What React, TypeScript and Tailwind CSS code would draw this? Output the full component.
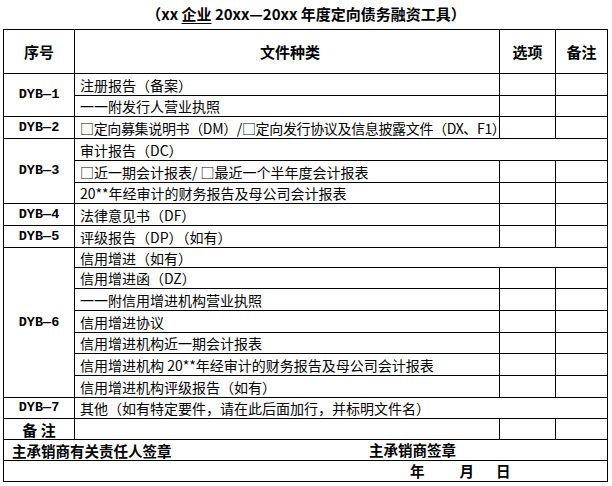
import React from "react";

const cjk = "font-['Noto_Sans_CJK_SC']";
const mono = "font-mono";

function Label({ text, span = "" }: { text: string; span?: string }) {
  return (
    <div className={`bg-white flex items-center justify-center ${span}`}>
      <span className={`${mono} font-bold text-[13.5px] leading-none`}>{text}</span>
    </div>
  );
}

function Txt({ text, span = "", tight = false }: { text: string; span?: string; tight?: boolean }) {
  return (
    <div className={`bg-white flex items-center pl-[5px] ${span}`}>
      <span className={`text-[14px] leading-none whitespace-nowrap ${tight ? "tracking-[-0.35px]" : ""}`}>{text}</span>
    </div>
  );
}

function Empty() {
  return <div className="bg-white" />;
}

function Row({ text, tight = false }: { text: string; tight?: boolean }) {
  return (
    <>
      <Txt text={text} tight={tight} />
      <Empty />
      <Empty />
    </>
  );
}

export default function App() {
  return (
    <div className={`w-[612px] h-[486px] bg-white text-black ${cjk}`}>
      <div className="h-[29px] flex items-center justify-center pb-[3px]">
        <span className="text-[15px] font-bold leading-none whitespace-pre">
          （xx <span className="underline underline-offset-[3px]">企业</span> 20xx—20xx 年度定向债务融资工具）
        </span>
      </div>
      <div className="ml-[3px] w-[605px] bg-black p-px gap-px grid grid-cols-[70px_424px_55px_51px] grid-rows-[43px_21px_20px_21px_21px_21px_20px_21px_21px_19px_20px_21px_21px_20px_21px_21px_20px_20px_20px_20px]">
        <div className="bg-white flex items-center justify-center">
          <span className="text-[15px] font-bold leading-none">序号</span>
        </div>
        <div className="bg-white flex items-center justify-center">
          <span className="text-[15px] font-bold leading-none pl-[6px]">文件种类</span>
        </div>
        <div className="bg-white flex items-center justify-center">
          <span className="text-[15px] font-bold leading-none">选项</span>
        </div>
        <div className="bg-white flex items-center justify-center">
          <span className="text-[15px] font-bold leading-none">备注</span>
        </div>

        <Label text="DYB—1" span="row-span-2" />
        <Row text="注册报告（备案）" />
        <Row text="一一附发行人营业执照" />

        <Label text="DYB—2" />
        <Row text="□定向募集说明书（DM）/□定向发行协议及信息披露文件（DX、F1）" tight />

        <Label text="DYB—3" span="row-span-3" />
        <Txt text="审计报告（DC）" span="col-span-3" />
        <Row text="□近一期会计报表/ □最近一个半年度会计报表" />
        <Row text="20**年经审计的财务报告及母公司会计报表" />

        <Label text="DYB—4" />
        <Row text="法律意见书（DF）" />

        <Label text="DYB—5" />
        <Row text="评级报告（DP）（如有）" />

        <Label text="DYB—6" span="row-span-7" />
        <Txt text="信用增进（如有）" span="col-span-3" />
        <Row text="信用增进函（DZ）" />
        <Row text="一一附信用增进机构营业执照" />
        <Row text="信用增进协议" />
        <Row text="信用增进机构近一期会计报表" />
        <Row text="信用增进机构 20**年经审计的财务报告及母公司会计报表" />
        <Row text="信用增进机构评级报告（如有）" />

        <Label text="DYB—7" />
        <Txt text="其他（如有特定要件，请在此后面加行，并标明文件名）" span="col-span-3" />

        <div className="bg-white flex items-center justify-center">
          <span className="text-[15px] font-bold leading-none whitespace-pre">备 注</span>
        </div>
        <Empty />
        <Empty />
        <Empty />

        <div className="bg-white col-span-4 flex items-center">
          <div className="w-[365px] pl-[8px]">
            <span className="text-[14.5px] font-bold leading-none">主承销商有关责任人签章</span>
          </div>
          <span className="text-[14.5px] font-bold leading-none">主承销商签章</span>
        </div>
        <div className="bg-white col-span-4 flex items-center pl-[406px]">
          <span className="text-[14.5px] font-bold leading-none">年</span>
          <span className="text-[14.5px] font-bold leading-none ml-[35px]">月</span>
          <span className="text-[14.5px] font-bold leading-none ml-[22px]">日</span>
        </div>
      </div>
    </div>
  );
}
